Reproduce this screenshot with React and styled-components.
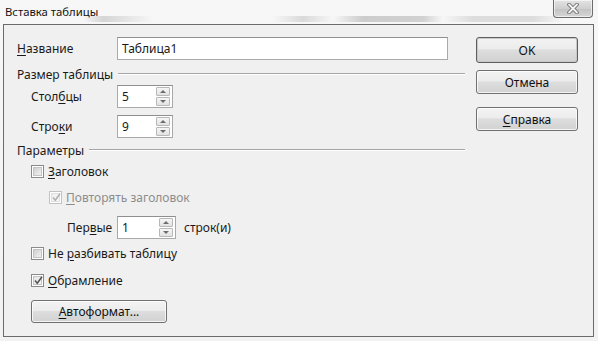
import React from "react";
import styled, { createGlobalStyle, css } from "styled-components";

const Global = createGlobalStyle`
  html, body { margin: 0; padding: 0; background: #ffffff; }
  body { font-family: "Noto Sans", "Open Sans", sans-serif; font-size: 12px; color: #1a1a1a; }
  * { box-sizing: border-box; }
`;

const Window = styled.div`
  width: 598px;
  height: 341px;
  background: linear-gradient(#f7f7f7, #f2f2f2);
  padding: 0 4px 4px 3px;
  display: flex;
  flex-direction: column;
`;

const TitleBar = styled.div`
  height: 24px;
  display: flex;
  align-items: flex-start;
  justify-content: space-between;
  background:
    linear-gradient(90deg, transparent 0, transparent 80px, rgba(150,150,150,0.35) 100px, transparent 150px,
      transparent 270px, rgba(150,150,150,0.3) 300px, transparent 330px, rgba(140,140,140,0.4) 360px,
      rgba(140,140,140,0.35) 420px, transparent 440px, rgba(160,160,160,0.3) 470px, rgba(160,160,160,0.3) 530px, transparent 560px)
      0 16px / 100% 6px no-repeat;
`;

const Title = styled.div`
  padding: 4px 0 0 2px;
  font-size: 11.3px;
  color: #111;
`;

const CloseBtn = styled.div`
  width: 40px;
  height: 18px;
  margin-right: 1px;
  border: 1px solid #6c6c6c;
  border-top: none;
  border-radius: 0 0 4px 4px;
  background: linear-gradient(#e4e4e4, #cfcfcf 50%, #c2c2c2 51%, #d6d6d6);
  display: flex;
  align-items: center;
  justify-content: center;
  box-shadow: inset 0 0 0 1px rgba(255,255,255,0.6);
`;

const Client = styled.div`
  flex: 1;
  border: 1px solid #6b6b6b;
  background: #f0f0f0;
  display: flex;
  padding: 12px 14px 0 13px;
`;

const Left = styled.div`
  width: 448px;
  display: flex;
  flex-direction: column;
`;

const Right = styled.div`
  margin-left: 11px;
  width: 102px;
  display: flex;
  flex-direction: column;
`;

const Row = styled.div`
  display: flex;
  align-items: center;
  height: ${(p) => p.$h || 23}px;
  margin-top: ${(p) => p.$mt || 0}px;
  padding-left: ${(p) => p.$indent || 0}px;
`;

const Label = styled.span`
  width: ${(p) => p.$w}px;
  flex: none;
  margin-left: ${(p) => p.$ml || 0}px;
  color: ${(p) => (p.$disabled ? "#8d8d8d" : "#1a1a1a")};
`;

const U = styled.span`
  text-decoration: underline;
  text-underline-offset: 2px;
`;

const TextBox = styled.div`
  width: ${(p) => p.$w}px;
  height: ${(p) => p.$h || 23}px;
  border: 1px solid #a9a9a9;
  border-top-color: #8f8f8f;
  background: #fff;
  display: flex;
  align-items: center;
  padding-left: 4px;
`;

const SpinBox = styled.div`
  margin-left: auto;
  margin-right: 2px;
  width: 14px;
  height: 19px;
  display: flex;
  flex-direction: column;
  gap: 1px;
`;

const SpinHalf = styled.div`
  flex: 1;
  border: 1px solid #b8b8b8;
  border-radius: 1px;
  background: linear-gradient(#f6f6f6, #e2e2e2);
  display: flex;
  align-items: center;
  justify-content: center;
`;

const Arrow = styled.div`
  width: 0;
  height: 0;
  border-left: 3px solid transparent;
  border-right: 3px solid transparent;
  ${(p) =>
    p.$up
      ? css`border-bottom: 3px solid #6d6d6d;`
      : css`border-top: 3px solid #6d6d6d;`}
`;

const Section = styled.div`
  display: flex;
  align-items: center;
  height: 16px;
  margin-top: ${(p) => p.$mt}px;
  width: 448px;
  &::after {
    content: "";
    flex: 1;
    height: 1px;
    background: #a6a6a6;
    margin-left: 5px;
    border-bottom: 1px solid #fff;
    box-sizing: content-box;
  }
`;

const CheckRow = styled.label`
  display: flex;
  align-items: center;
  height: 16px;
  margin-top: ${(p) => p.$mt}px;
  padding-left: ${(p) => p.$indent}px;
  color: ${(p) => (p.$disabled ? "#8d8d8d" : "#1a1a1a")};
`;

const Box = styled.span`
  position: relative;
  width: 13px;
  height: 13px;
  flex: none;
  border: 1px solid ${(p) => (p.$disabled ? "#c2c2c2" : "#8a8a8a")};
  background: #fff;
  margin-right: 4px;
  display: flex;
  align-items: center;
  justify-content: center;
  &::before {
    content: "";
    width: 9px;
    height: 9px;
    background: ${(p) =>
      p.$disabled
        ? "linear-gradient(135deg, #eeeeee, #f8f8f8)"
        : p.$checked
        ? "linear-gradient(135deg, #e6e6e6, #f7f7f7)"
        : "linear-gradient(135deg, #cfcfcf, #f1f1f1)"};
    border: 1px solid ${(p) => (p.$disabled ? "#e0e0e0" : "#c4c4c4")};
    box-sizing: border-box;
  }
  svg { position: absolute; left: 1px; top: 0px; }
`;

const Button = styled.div`
  width: ${(p) => p.$w || 102}px;
  height: ${(p) => p.$h || 24}px;
  margin-top: ${(p) => p.$mt || 0}px;
  border: 1px solid ${(p) => (p.$default ? "#5f5f5f" : "#707070")};
  border-radius: 3px;
  background: linear-gradient(#f3f3f3, #ececec 45%, #dddddd 50%, #d2d2d2);
  box-shadow: inset 0 0 0 1px ${(p) => (p.$default ? "#c8c8c8" : "rgba(255,255,255,0.75)")};
  display: flex;
  align-items: center;
  justify-content: center;
  color: #111;
`;

const Check = ({ color }) => (
  <svg width="11" height="11" viewBox="0 0 11 11">
    <path d="M2 5.5 L4.3 8.2 L9 1.8" fill="none" stroke={color} strokeWidth="1.6" />
  </svg>
);

const Spin = () => (
  <SpinBox>
    <SpinHalf><Arrow $up /></SpinHalf>
    <SpinHalf><Arrow /></SpinHalf>
  </SpinBox>
);

const CheckItem = ({ checked, disabled, mt, indent, children }) => (
  <CheckRow $mt={mt} $indent={indent} $disabled={disabled}>
    <Box $checked={checked} $disabled={disabled}>
      {checked && <Check color={disabled ? "#b0b0b0" : "#555"} />}
    </Box>
    <span>{children}</span>
  </CheckRow>
);

export default function App() {
  return (
    <>
      <Global />
      <Window>
        <TitleBar>
          <Title>Вставка таблицы</Title>
          <CloseBtn>
            <svg width="14" height="11" viewBox="0 0 14 11">
              <path d="M3 1.5 L11 9.5 M11 1.5 L3 9.5" stroke="#6a6a6a" strokeWidth="3.6" strokeLinecap="round" />
              <path d="M3 1.5 L11 9.5 M11 1.5 L3 9.5" stroke="#f4f4f4" strokeWidth="1.8" strokeLinecap="round" />
            </svg>
          </CloseBtn>
        </TitleBar>
        <Client>
          <Left>
            <Row>
              <Label $w={100}><U>Н</U>азвание</Label>
              <TextBox $w={331}>Таблица1</TextBox>
            </Row>
            <Section $mt={6}>Размер таблицы</Section>
            <Row $mt={3} $indent={14}>
              <Label $w={86}>Стол<U>б</U>цы</Label>
              <TextBox $w={56}>5<Spin /></TextBox>
            </Row>
            <Row $mt={7} $indent={14}>
              <Label $w={86}>Стро<U>к</U>и</Label>
              <TextBox $w={56}>9<Spin /></TextBox>
            </Row>
            <Section $mt={4}>Параметры</Section>
            <CheckItem mt={5} indent={14}><U>З</U>аголовок</CheckItem>
            <CheckItem mt={10} indent={32} checked disabled><U>П</U>овторять заголовок</CheckItem>
            <Row $mt={11} $indent={50}>
              <Label $w={50}>Пер<U>в</U>ые</Label>
              <TextBox $w={59}>1<Spin /></TextBox>
              <Label $w={80} $ml={8}>строк(и)</Label>
            </Row>
            <CheckItem mt={6} indent={14}>Не <U>р</U>азбивать таблицу</CheckItem>
            <CheckItem mt={11} indent={14} checked><U>О</U>брамление</CheckItem>
            <Row $mt={12} $indent={14} $h={23}>
              <Button $w={136} $h={23}><U>А</U>втоформат...</Button>
            </Row>
          </Left>
          <Right>
            <Button $default $h={26}>OK</Button>
            <Button $mt={7} $h={24}>Отмена</Button>
            <Button $mt={13} $h={24}><U>С</U>правка</Button>
          </Right>
        </Client>
      </Window>
    </>
  );
}
